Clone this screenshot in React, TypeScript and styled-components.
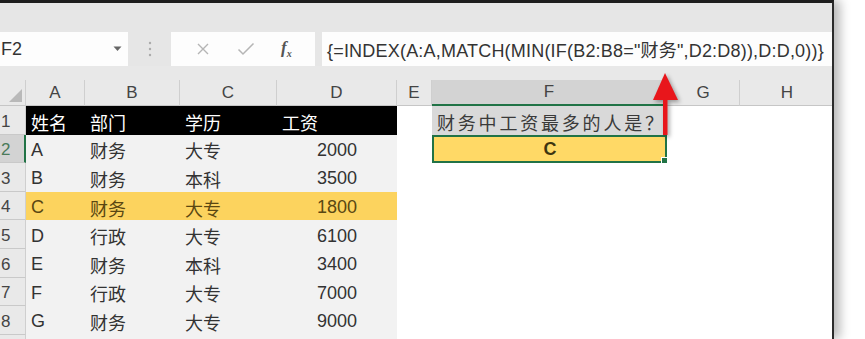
import React from "react";
import styled, { createGlobalStyle } from "styled-components";

const GlobalStyle = createGlobalStyle`
    html, body {
        margin: 0;
        padding: 0;
        background: #ffffff;
        overflow: hidden;
    }
    body {
        font-family: "Liberation Sans", "Noto Sans CJK SC", sans-serif;
    }
`;

const COLUMNS = [
    { name: "", width: 26 },
    { name: "A", width: 59 },
    { name: "B", width: 95 },
    { name: "C", width: 97 },
    { name: "D", width: 120 },
    { name: "E", width: 35 },
    { name: "F", width: 235 },
    { name: "G", width: 73 },
    { name: "H", width: 95 },
];

const ROW_HEIGHT = 28.6;

const PEOPLE = [
    ["A", "财务", "大专", "2000"],
    ["B", "财务", "本科", "3500"],
    ["C", "财务", "大专", "1800"],
    ["D", "行政", "大专", "6100"],
    ["E", "财务", "本科", "3400"],
    ["F", "行政", "大专", "7000"],
    ["G", "财务", "大专", "9000"],
];

const Page = styled.div`
    display: flex;
    height: 339px;
    width: 865px;
`;

const Frame = styled.div`
    position: relative;
    width: 834px;
    height: 339px;
    display: flex;
    flex-direction: column;
    background: #e8e8e8;
    border-top: 3px solid #1e1e1e;
    border-right: 2px solid #2b2b2b;
    box-sizing: border-box;
    box-shadow: 6px 0 10px rgba(0, 0, 0, 0.28);
    overflow: hidden;
`;

const RibbonStrip = styled.div`
    flex: none;
    height: 29px;
    background: #e6e6e6;
`;

const FormulaBar = styled.div`
    flex: none;
    display: flex;
    align-items: stretch;
    height: 34px;
    background: #e6e6e6;
`;

const NameBox = styled.div`
    width: 128px;
    display: flex;
    align-items: center;
    justify-content: space-between;
    background: #fdfdfd;
    padding: 0 6px 0 1px;
    box-sizing: border-box;
    font-size: 18px;
    color: #333;
`;

const Grip = styled.div`
    width: 43px;
    display: flex;
    align-items: center;
    justify-content: center;
`;

const FxBox = styled.div`
    width: 144px;
    display: flex;
    align-items: center;
    justify-content: space-around;
    background: #fdfdfd;
    padding: 0 10px 0 12px;
    box-sizing: border-box;
`;

const FxLabel = styled.span`
    font-family: "Liberation Serif", serif;
    font-style: italic;
    font-size: 17px;
    color: #555;
    font-weight: bold;

    sub {
        font-size: 10px;
    }
`;

const FormulaBox = styled.div`
    flex: 1;
    margin-left: 7px;
    display: flex;
    align-items: center;
    background: #fdfdfd;
    padding-left: 5px;
    font-size: 18px;
    letter-spacing: 0.2px;
    color: #333;
    white-space: nowrap;
`;

const Spacer = styled.div`
    flex: none;
    height: 14px;
    background: #e8e8e8;
`;

const Sheet = styled.div`
    flex: none;
    display: grid;
    grid-template-columns: ${COLUMNS.map((c) => c.width + "px").join(" ")};
    grid-template-rows: 26px repeat(9, ${ROW_HEIGHT}px);
    background: #ffffff;
`;

const ColHeader = styled.div<{ $selected?: boolean }>`
    display: flex;
    align-items: center;
    justify-content: center;
    font-size: 17px;
    color: #444;
    background: ${(p) => (p.$selected ? "#d3d3d3" : "#e9e9e9")};
    border-right: 1px solid #cfcfcf;
    border-bottom: ${(p) => (p.$selected ? "2px solid #217346" : "1px solid #c6c6c6")};
    box-sizing: border-box;
`;

const Corner = styled.div`
    background: #e9e9e9;
    border-right: 1px solid #cfcfcf;
    border-bottom: 1px solid #c6c6c6;
    display: flex;
    align-items: flex-end;
    justify-content: flex-end;
    padding: 0 3px 3px 0;
    box-sizing: border-box;
`;

const RowHeader = styled.div<{ $selected?: boolean }>`
    display: flex;
    align-items: flex-end;
    padding: 0 0 2px 1px;
    font-size: 17px;
    color: ${(p) => (p.$selected ? "#4a7a5a" : "#444")};
    background: ${(p) => (p.$selected ? "#d3d3d3" : "#e9e9e9")};
    border-right: ${(p) => (p.$selected ? "2px solid #217346" : "1px solid #cfcfcf")};
    border-bottom: 1px solid #c9c9c9;
    box-sizing: border-box;
`;

type CellKind = "title" | "data" | "hilite" | "blank" | "question" | "answer";

const cellBackground: Record<CellKind, string> = {
    title: "#000000",
    data: "#f2f2f2",
    hilite: "#fcd35e",
    blank: "#ffffff",
    question: "#d9d9d9",
    answer: "#ffd966",
};

const cellColor: Record<CellKind, string> = {
    title: "#ffffff",
    data: "#333333",
    hilite: "#5a4712",
    blank: "#333333",
    question: "#3a3a3a",
    answer: "#3d3510",
};

const Cell = styled.div<{ $kind: CellKind; $align?: "left" | "right" | "center" }>`
    position: relative;
    display: flex;
    align-items: center;
    justify-content: ${(p) =>
        p.$align === "right" ? "flex-end" : p.$align === "center" ? "center" : "flex-start"};
    padding: 3px ${(p) => (p.$align === "right" ? "40px" : "4px")} 0 5px;
    font-size: 18px;
    font-weight: ${(p) => (p.$kind === "answer" ? "bold" : "normal")};
    color: ${(p) => cellColor[p.$kind]};
    background: ${(p) => cellBackground[p.$kind]};
    white-space: nowrap;
    box-sizing: border-box;
`;

const QuestionText = styled.span`
    letter-spacing: 2.8px;
`;

const SelectedCell = styled(Cell)`
    border: 2px solid #217346;
    padding-top: 1px;
`;

const FillHandle = styled.span`
    position: absolute;
    right: -4px;
    bottom: -4px;
    width: 6px;
    height: 6px;
    background: #217346;
    border: 1px solid #ffffff;
`;

const ArrowOverlay = styled.svg`
    position: absolute;
    left: 648px;
    top: 64px;
    filter: drop-shadow(2px 2px 2px rgba(0, 0, 0, 0.35));
`;

const DropArrow = () => (
    <svg width="9" height="6" viewBox="0 0 9 6">
        <path d="M0.5 0.5 L8.5 0.5 L4.5 5 Z" fill="#666" />
    </svg>
);

const GripDots = () => (
    <svg width="4" height="16" viewBox="0 0 4 16">
        <circle cx="2" cy="2" r="1.2" fill="#aaa" />
        <circle cx="2" cy="8" r="1.2" fill="#aaa" />
        <circle cx="2" cy="14" r="1.2" fill="#aaa" />
    </svg>
);

const CancelIcon = () => (
    <svg width="14" height="14" viewBox="0 0 14 14">
        <path d="M2 2 L12 12 M12 2 L2 12" stroke="#b5b5b5" strokeWidth="1.4" fill="none" />
    </svg>
);

const EnterIcon = () => (
    <svg width="18" height="14" viewBox="0 0 18 14">
        <path d="M1.5 7.5 L6 12 L16.5 1.5" stroke="#b5b5b5" strokeWidth="1.5" fill="none" />
    </svg>
);

const CornerTriangle = () => (
    <svg width="13" height="13" viewBox="0 0 13 13">
        <path d="M13 0 L13 13 L0 13 Z" fill="#b9b9b9" />
    </svg>
);

const RedArrow = () => (
    <ArrowOverlay width="36" height="72" viewBox="0 0 36 72">
        <path d="M17 6 L30 33 L5 33 Z" fill="#e8161b" />
        <rect x="15" y="32" width="4.5" height="36" fill="#e8161b" />
    </ArrowOverlay>
);

const DataRow = ({ row, index }: { row: string[]; index: number }): JSX.Element => {
    const kind: CellKind = row[0] === "C" ? "hilite" : "data";
    return (
        <>
            <RowHeader $selected={index === 2}>{index}</RowHeader>
            <Cell $kind={kind}>{row[0]}</Cell>
            <Cell $kind={kind}>{row[1]}</Cell>
            <Cell $kind={kind}>{row[2]}</Cell>
            <Cell $kind={kind} $align="right">
                {row[3]}
            </Cell>
            <Cell $kind="blank" />
            {index === 2 ? (
                <SelectedCell $kind="answer" $align="center">
                    C
                    <FillHandle />
                </SelectedCell>
            ) : (
                <Cell $kind="blank" />
            )}
            <Cell $kind="blank" />
            <Cell $kind="blank" />
        </>
    );
};

const App = (): JSX.Element => {
    return (
        <Page>
            <GlobalStyle />
            <Frame>
                <RibbonStrip />
                <FormulaBar>
                    <NameBox>
                        <span>F2</span>
                        <DropArrow />
                    </NameBox>
                    <Grip>
                        <GripDots />
                    </Grip>
                    <FxBox>
                        <CancelIcon />
                        <EnterIcon />
                        <FxLabel>
                            f<sub>x</sub>
                        </FxLabel>
                    </FxBox>
                    <FormulaBox>{'{=INDEX(A:A,MATCH(MIN(IF(B2:B8="财务",D2:D8)),D:D,0))}'}</FormulaBox>
                </FormulaBar>
                <Spacer />
                <Sheet>
                    <Corner>
                        <CornerTriangle />
                    </Corner>
                    {COLUMNS.slice(1).map((col) => (
                        <ColHeader key={col.name} $selected={col.name === "F"}>
                            {col.name}
                        </ColHeader>
                    ))}

                    <RowHeader>1</RowHeader>
                    <Cell $kind="title">姓名</Cell>
                    <Cell $kind="title">部门</Cell>
                    <Cell $kind="title">学历</Cell>
                    <Cell $kind="title">工资</Cell>
                    <Cell $kind="blank" />
                    <Cell $kind="question">
                        <QuestionText>财务中工资最多的人是？</QuestionText>
                    </Cell>
                    <Cell $kind="blank" />
                    <Cell $kind="blank" />

                    {PEOPLE.map((row, i) => (
                        <DataRow key={row[0]} row={row} index={i + 2} />
                    ))}

                    <RowHeader />
                    {COLUMNS.slice(1).map((col) => (
                        <Cell key={"r9" + col.name} $kind={["A", "B", "C", "D"].includes(col.name) ? "data" : "blank"} />
                    ))}
                </Sheet>
                <RedArrow />
            </Frame>
        </Page>
    );
};

export default App;
